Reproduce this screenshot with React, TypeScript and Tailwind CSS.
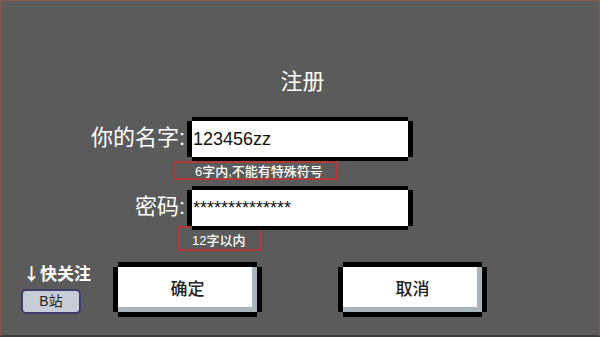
import type { ReactNode } from 'react';

interface FrameProps {
  className: string;
  bar: string;
  children: ReactNode;
}

// pixel-art box: black edges with notched corners
function Frame({ className, bar, children }: FrameProps) {
  return (
    <div className={`flex flex-col ${className}`}>
      <div className={`mx-[5px] bg-black ${bar}`} />
      <div className="flex flex-1">
        <div className="w-[5px] bg-black" />
        {children}
        <div className="w-[5px] bg-black" />
      </div>
      <div className={`mx-[5px] bg-black ${bar}`} />
    </div>
  );
}

function FieldRow({ label, value }: { label: string; value: string }) {
  return (
    <div className="flex h-[44px] items-center">
      <div className="w-[186px] pr-[2px] pb-[3px] text-right text-[22px] leading-[26px] text-white">{label}</div>
      <Frame className="w-[226px] h-[44px]" bar="h-[4px]">
        <div className="flex flex-1 items-center bg-white pl-[1px] font-['Liberation_Sans',sans-serif] text-[18px] text-[#111]">
          {value}
        </div>
      </Frame>
    </div>
  );
}

function PixelButton({ text }: { text: string }) {
  return (
    <Frame className="w-[149px] h-[55px]" bar="h-[5px]">
      <div className="flex flex-1 items-center justify-center border-r-[5px] border-b-[5px] border-[#a9b5bd] bg-white pl-[5px] pt-[5px] text-[17px] font-medium text-[#222]">
        {text}
      </div>
    </Frame>
  );
}

function Hint({ className, text }: { className: string; text: string }) {
  return (
    <div className={`shrink-0 border-2 border-solid border-[#b03b36] text-[13px] font-medium leading-[14px] whitespace-nowrap text-white ${className}`}>
      {text}
    </div>
  );
}

export default function App() {
  return (
    <div className="flex h-[337px] w-[600px] flex-col overflow-hidden border-x border-t border-[#88594f] border-b-2 border-b-[#3e3e3e] bg-[#5b5b5b] font-['Liberation_Sans','Noto_Sans_CJK_SC',sans-serif]">
      <div className="pt-[68px] pl-[5px] text-center text-[22px] leading-[26px] text-white">注册</div>

      <div className="mt-[22px]">
        <FieldRow label="你的名字:" value="123456zz" />
      </div>
      <div className="flex pl-[173px]">
        <Hint className="h-[19px] w-[164px] pl-[19px] pt-[2px]" text="6字内,不能有特殊符号" />
      </div>

      <div className="relative z-10 mt-[6px]">
        <FieldRow label="密码:" value="**************" />
      </div>
      <div className="-mt-[4px] flex pl-[177px]">
        <Hint className="h-[25px] w-[84px] pl-[12px] pt-[6px]" text="12字以内" />
      </div>

      <div className="mt-[11px] flex items-start">
        <div className="ml-[20px] flex w-[92px] flex-col items-start">
          <div className="ml-[2px] font-['Noto_Sans_CJK_SC',sans-serif] text-[17px] font-bold leading-[22px] text-white">↓快关注</div>
          <button className="mt-[5px] flex h-[25px] w-[60px] items-center justify-center rounded-[5px] border-2 border-[#3d3d6e] bg-[#c6cdd7] text-[14px] text-[#222]">
            B站
          </button>
        </div>
        <PixelButton text="确定" />
        <div className="ml-[76px]">
          <PixelButton text="取消" />
        </div>
      </div>
    </div>
  );
}
